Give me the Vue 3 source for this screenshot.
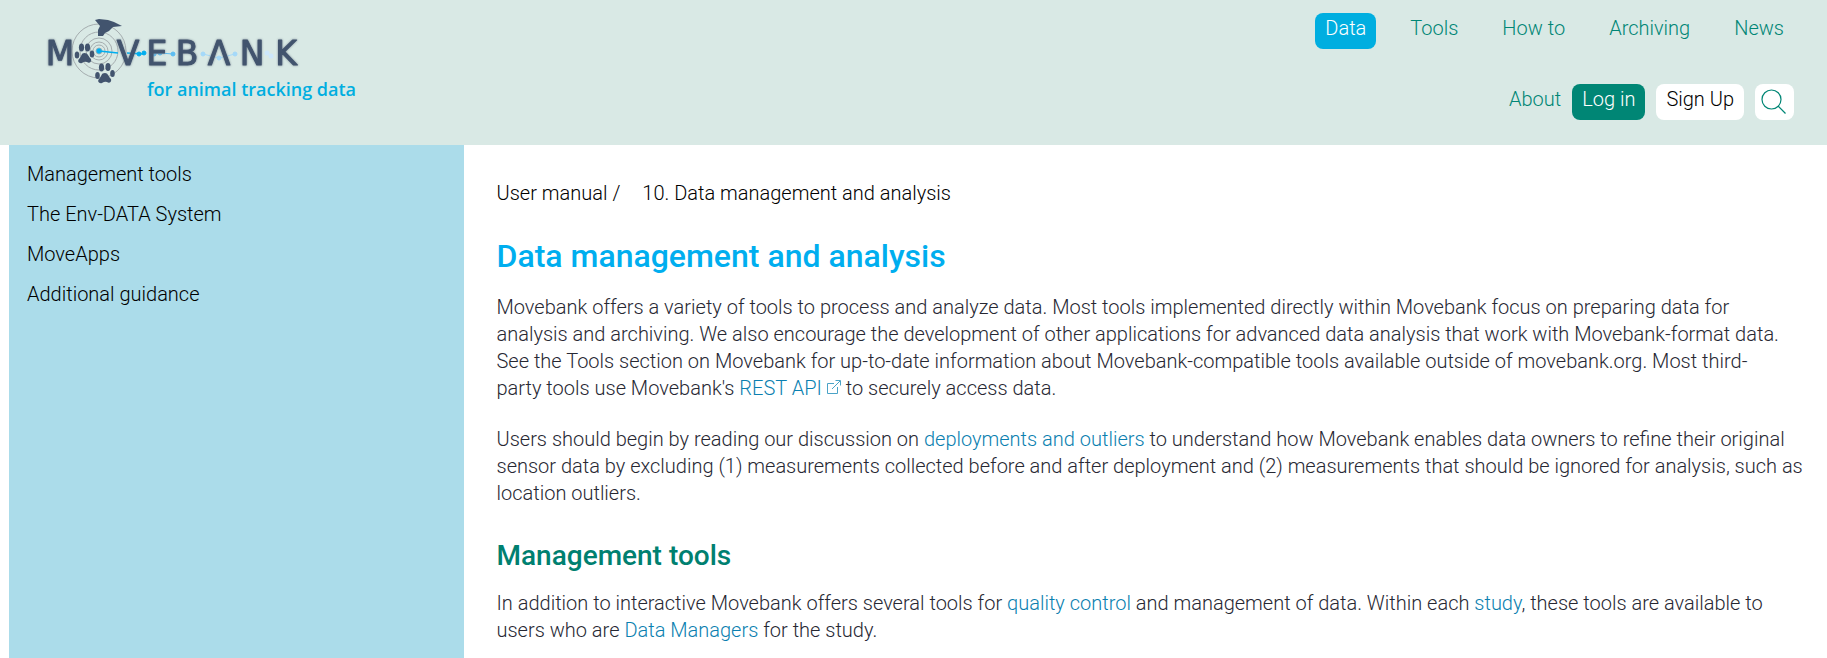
<script setup>
const nav = ['Data', 'Tools', 'How to', 'Archiving', 'News']
const sections = ['Management tools', 'The Env-DATA System', 'MoveApps', 'Additional guidance']
const letters = [
  { t: 'M', x: 60 }, { t: 'V', x: 128 }, { t: 'E', x: 157 }, { t: 'B', x: 187 },
  { t: 'Λ', x: 219 }, { t: 'N', x: 252 }, { t: 'K', x: 286 }
]
const rings = [3, 6, 9, 13, 19, 27]
</script>

<template>
  <div class="page">
    <header class="header">
      <a href="#" class="brand" aria-label="Movebank for animal tracking data">
        <svg class="logo" viewBox="0 0 380 110" width="380" height="110">
          <g fill="none" stroke="#a5adaf" stroke-width="1">
            <circle v-for="r in rings" :key="r" cx="99" cy="51" :r="r" />
          </g>
          <g fill="#42546e">
            <path d="M95 20 L99 19 L108 20 L114 22 L122 26 L113 27 L109 31 L105 33 L103 36 L98 36 L98 30 L100 26 Z" />
            <ellipse cx="77" cy="55" rx="2.3" ry="3.5" />
            <ellipse cx="81.500" cy="47.500" rx="2.600" ry="4" />
            <ellipse cx="87.500" cy="47.500" rx="2.600" ry="4" />
            <ellipse cx="92" cy="54" rx="2.300" ry="3.500" />
            <path d="M84.500 53 C88 53 88 56 91 59 C92 62 89 64 87 62 Q84.500 61 82 63 C79 64 77 61 79 59 C82 56 81 53 84.500 53Z" />
            <ellipse cx="97.500" cy="75.500" rx="2.300" ry="3.500" />
            <ellipse cx="101.500" cy="67.500" rx="2.600" ry="4" />
            <ellipse cx="108" cy="67" rx="2.600" ry="4" />
            <ellipse cx="112.500" cy="73.500" rx="2.300" ry="3.500" />
            <path d="M105 73 C108 73 108 76 111 79 C112 82 109 84 107 82 Q105 81 102 83 C99 84 97 81 99 79 C102 76 101 73 105 73Z" />
          </g>
          <g fill="#00aeef" stroke="#00aeef">
            <path d="M99 51 L118 53 M127 53 L144 54" fill="none" stroke-width="1.500" />
            <circle cx="99" cy="51" r="2.200" /><circle cx="139" cy="54" r="2" /><circle cx="144" cy="53" r="2" />
          </g>
          <g fill="#5cbdf2" stroke="#5cbdf2">
            <path d="M154 54 L160 53 L173 54" fill="none" />
            <circle cx="154" cy="54" r="2" /><circle cx="160" cy="53" r="2" /><circle cx="173" cy="54" r="2" />
          </g>
          <g fill="#a4d9fa" stroke="#a4d9fa">
            <path d="M203 54 L219 58 L235 54" fill="none" />
            <circle cx="203" cy="54" r="2" /><circle cx="219" cy="58" r="2" /><circle cx="235" cy="54" r="2" />
          </g>
          <g fill="#cde7fb"><circle cx="267" cy="53" r="2.500" /><circle cx="271" cy="56" r="2.500" /></g>
          <g class="wordmark">
            <text v-for="l in letters" :key="l.t" :x="l.x" y="65">{{ l.t }}</text>
          </g>
          <text class="tagline" x="147" y="96">for animal tracking data</text>
        </svg>
      </a>
      <div class="menus">
        <nav class="main-nav" aria-label="Main">
          <a v-for="(n, i) in nav" :key="n" href="#" class="pill" :class="{ active: i === 0 }">{{ n }}</a>
        </nav>
        <div class="user-nav">
          <a href="#" class="about">About</a>
          <button type="button" class="pill login">Log in</button>
          <button type="button" class="pill signup">Sign Up</button>
          <button type="button" class="pill search" aria-label="Search">
            <svg width="27" height="27" viewBox="0 0 27 27" fill="none" stroke="#008675" stroke-width="1.200">
              <circle cx="10.500" cy="10.500" r="9.500" /><path d="M17 17 L24.500 24.500" />
            </svg>
          </button>
        </div>
      </div>
    </header>

    <div class="columns">
      <aside class="sidebar">
        <a v-for="s in sections" :key="s" href="#">{{ s }}</a>
      </aside>
      <main class="content">
        <nav class="crumbs" aria-label="Breadcrumb">
          <a href="#">User manual</a><span class="slash">/</span><a href="#">10. Data management and analysis</a>
        </nav>
        <h1>Data management and analysis</h1>
        <p>Movebank offers a variety of tools to process and analyze data. Most tools implemented directly within Movebank focus on preparing data for<br>analysis and archiving. We also encourage the development of other applications for advanced data analysis that work with Movebank-format data.<br>See the Tools section on Movebank for up-to-date information about Movebank-compatible tools available outside of movebank.org. Most third-<br>party tools use Movebank's <a href="#">REST API<svg class="ext" width="15" height="15" viewBox="0 0 15 15" fill="none" stroke="#4aa3c7"><path d="M8 3.500 H1.500 V13.500 H11.500 V7 M6 9 L14 1 M9.500 .5 H14.500 V5.500" /></svg></a> to securely access data.</p>
        <p>Users should begin by reading our discussion on <a href="#">deployments and outliers</a> to understand how Movebank enables data owners to refine their original sensor data by excluding (1) measurements collected before and after deployment and (2) measurements that should be ignored for analysis, such as location outliers.</p>
        <h2>Management tools</h2>
        <p>In addition to interactive Movebank offers several tools for <a href="#">quality control</a> and management of data. Within each <a href="#">study</a>, these tools are available to users who are <a href="#">Data Managers</a> for the study.</p>
      </main>
    </div>
  </div>
</template>

<style>
body { margin: 0; background: #fff; }
</style>

<style scoped>
.page {
  min-height: 100vh;
  display: flex;
  flex-direction: column;
  font-family: Roboto, "Open Sans", sans-serif;
  font-size: 20px;
  font-weight: 300;
  line-height: 27px;
  color: #272833;
}
a { color: #0b7fb0; text-decoration: none; }
.header {
  display: flex;
  justify-content: space-between;
  min-height: 145px;
  background: #d9e9e5;
}
.brand, .logo { display: block; }
.wordmark {
  font-family: "DejaVu Sans", sans-serif;
  font-size: 33px;
  font-weight: 400;
  fill: #42546e;
  stroke: #42546e;
  stroke-width: 1px;
  stroke-linejoin: round;
  text-anchor: middle;
  filter: drop-shadow(0 0 1px #7d8b96);
}
.tagline {
  font-family: "Open Sans", sans-serif;
  font-size: 18px;
  font-weight: 600;
  fill: #00aee0;
}
.menus {
  display: flex;
  flex-direction: column;
  align-items: flex-end;
  gap: 35px;
  padding: 13px 33px 0 0;
}
.main-nav { display: flex; gap: 24px; }
.user-nav { display: flex; gap: 11px; }
.pill {
  box-sizing: border-box;
  height: 36px;
  padding: 2px 10px 7px;
  border: 0;
  border-radius: 8px;
  background: none;
  font: inherit;
  color: #008675;
}
.active { background: #00aee0; color: #fff; }
.about { color: #008675; padding-top: 2px; }
.login { background: #008675; color: #fff; }
.signup { background: #fff; color: #000; }
.search { padding: 4px 6px; background: #fff; }
.search svg { display: block; }
.columns {
  flex: 1;
  display: grid;
  grid-template-columns: 1fr 3fr;
  padding-left: 9px;
}
.sidebar {
  display: flex;
  flex-direction: column;
  gap: 13px;
  padding: 16px 18px;
  background: #abdcea;
}
.sidebar a { color: #000; }
.content { padding: 35px 20px 0 33px; }
.crumbs { display: flex; }
.crumbs a, .slash { color: #000; }
.slash { margin: 0 22px 0 5px; }
h1 {
  margin: 28px 0 17px;
  font-size: 32px;
  line-height: 42px;
  font-weight: 500;
  color: #00aeef;
}
h2 {
  margin: 31px 0 16px;
  font-size: 28px;
  line-height: 36px;
  font-weight: 500;
  color: #008070;
}
p { margin: 0 0 24px; }
.ext { margin: 0 0 0 4px; }
</style>
